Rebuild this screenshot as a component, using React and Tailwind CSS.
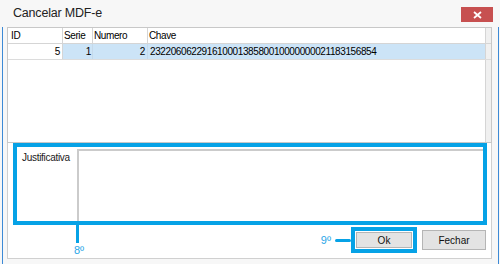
import React from "react";

const row = { id: 5, serie: 1, numero: 2, chave: "23220606229161000138580010000000021183156854" };

function CloseButton() {
  return (
    <div className="mt-[7px] mr-[7px] flex h-[15px] w-[32px] items-center justify-center bg-[#c75050]">
      <svg width="9" height="8" viewBox="0 0 9 8">
        <path d="M1 1 L8 7 M8 1 L1 7" stroke="#fff" strokeWidth="1.8" />
      </svg>
    </div>
  );
}

function Grid() {
  return (
    <div className="flex h-[116px] w-[485px] flex-col border border-[#c8c8c8] bg-white text-[10px] tracking-[-0.4px] text-black">
      {/* header */}
      <div className="flex h-[16px] border-b border-[#d5d5d5]">
        <div className="flex w-[55px] items-center border-r border-[#d5d5d5] pl-[3px]">ID</div>
        <div className="flex w-[30px] items-center border-r border-[#d5d5d5] pl-[1px]">Serie</div>
        <div className="flex w-[55px] items-center border-r border-[#d5d5d5] pl-[1px]">Numero</div>
        <div className="flex flex-1 items-center pl-[1px]">Chave</div>
        <div className="w-[6px] border-l border-[#d5d5d5] bg-[#f0f0f0]" />
      </div>
      {/* selected row */}
      <div className="flex h-[16px] border-b border-[#dcdcdc]">
        <div className="flex w-[55px] items-center justify-end border-r border-[#d5d5d5] pr-[2px]">{row.id}</div>
        <div className="flex w-[30px] items-center justify-end border-r border-[#c5d9ea] bg-[#cce4f7] pr-[1px]">{row.serie}</div>
        <div className="flex w-[55px] items-center justify-end border-r border-[#c5d9ea] bg-[#cce4f7] pr-[2px]">{row.numero}</div>
        <div className="flex flex-1 items-center bg-[#cce4f7] pl-[2px]">{row.chave}</div>
        <div className="w-[6px] border-l border-[#d5d5d5] bg-[#f0f0f0]" />
      </div>
      <div className="flex flex-1 justify-end">
        <div className="w-[6px] border-l border-[#d5d5d5] bg-[#f0f0f0]" />
      </div>
    </div>
  );
}

export default function App() {
  return (
    <div
      className="flex h-[264px] w-[500px] flex-col bg-[#f7f7f7]"
      style={{ fontFamily: '"Liberation Sans", Arial, sans-serif' }}
    >
      {/* title bar */}
      <div className="flex h-[27px] items-start justify-between">
        <div className="pl-[13px] pt-[7px] text-[12.5px] leading-none tracking-[-0.2px] text-[#222]">Cancelar MDF-e</div>
        <CloseButton />
      </div>

      <div className="flex flex-1">
        <div className="w-[2px]" />
        <div className="w-[1px] bg-[#3d8ad6]" />
        <div className="w-[4px]" />

        <div className="flex w-[485px] flex-col">
          <Grid />

          {/* justificativa panel */}
          <div className="flex h-[116px] flex-col border-x border-b border-[#d0d0d0] bg-white">
            <div className="ml-[5px] flex h-[82px] w-[474px] border-4 border-[#06a2e6]">
              <div className="w-[60px] pl-[5px] pt-[6px] text-[10px] leading-none tracking-[-0.3px] text-[#1a1a1a]">
                Justificativa
              </div>
              <div className="mt-[2px] flex-1 border-l-2 border-t-2 border-[#cbcbcb] bg-white" />
            </div>

            <div className="flex flex-1">
              {/* 8º marker */}
              <div className="ml-[68px] flex flex-col items-start">
                <div className="h-[18px] w-[3px] bg-[#06a2e6]" />
                <div className="ml-[-2px] mt-[2px] text-[11px] leading-none text-[#2aa7e8]">8º</div>
              </div>

              {/* buttons */}
              <div className="ml-auto mr-[5px] mt-[2px] flex h-[26px] items-center">
                <div className="text-[11px] leading-none text-[#2aa7e8]">9º</div>
                <div className="ml-[4px] h-[3px] w-[16px] rounded-full bg-[#06a2e6]" />
                <div className="flex h-[26px] w-[66px] border-4 border-[#06a2e6] bg-white p-[1px]">
                  <div className="flex flex-1 items-center justify-center border border-[#b5b5b5] bg-[#e3e3e3] text-[10px] text-[#111]">
                    Ok
                  </div>
                </div>
                <div className="ml-[5px] flex h-[20px] w-[64px] items-center justify-center border border-[#b5b5b5] bg-[#e3e3e3] text-[10px] text-[#111]">
                  Fechar
                </div>
              </div>
            </div>
          </div>
        </div>

        <div className="w-[6px]" />
        <div className="w-[1px] bg-[#3d8ad6]" />
      </div>
    </div>
  );
}
